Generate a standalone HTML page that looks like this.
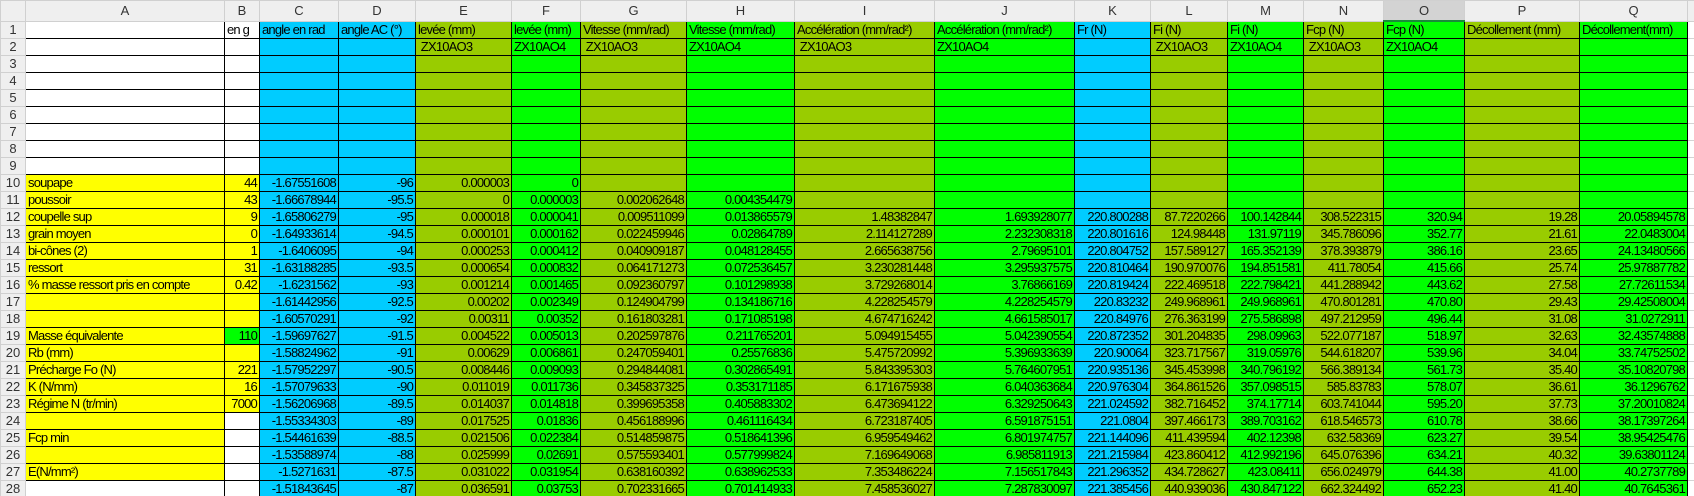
<!DOCTYPE html>
<html><head><meta charset="utf-8"><style>
html,body{margin:0;padding:0;background:#fff;width:1694px;height:496px;overflow:hidden}
table{border-collapse:collapse;table-layout:fixed;width:1694px;font-family:"Liberation Sans",Arial,sans-serif;font-size:13px;color:#000}
td{border:1px solid #000;height:16px;padding:0 2px;line-height:16px;white-space:nowrap;overflow:hidden;text-align:right;vertical-align:bottom;letter-spacing:-0.8px}
th{background:#efefef;border:1px solid #d0d0d0;font-weight:normal;color:#333;font-size:13px;padding:0;text-align:center;white-space:nowrap;overflow:hidden}
thead th{height:19px}
tbody th{height:16px;line-height:16px}
td.l{text-align:left}
.y{background:#ff0}.w{background:#fff}.gr{background:#00ff00}
td.e{border:1px solid #d4d4d4;background:#fff}
th.sel{background:#d3d3d3;border-bottom:2px solid #1a8a3a}
</style></head><body>
<table>
<colgroup>
<col style="width:25px"><col style="width:199px;background:#fff"><col style="width:35px;background:#fff">
<col style="width:79px;background:#00ccff"><col style="width:77px;background:#00ccff">
<col style="width:96px;background:#99cc00"><col style="width:69px;background:#00ff00">
<col style="width:106px;background:#99cc00"><col style="width:108px;background:#00ff00">
<col style="width:140px;background:#99cc00"><col style="width:140px;background:#00ff00">
<col style="width:76px;background:#00ccff">
<col style="width:77px;background:#99cc00"><col style="width:76px;background:#00ff00">
<col style="width:80px;background:#99cc00"><col style="width:81px;background:#00ff00">
<col style="width:115px;background:#99cc00"><col style="width:108px;background:#00ff00">
<col style="width:7px;background:#fff">
</colgroup>
<thead><tr><th></th><th>A</th><th>B</th><th>C</th><th>D</th><th>E</th><th>F</th><th>G</th><th>H</th><th>I</th><th>J</th><th>K</th><th>L</th><th>M</th><th>N</th><th class="sel">O</th><th>P</th><th>Q</th><th></th></tr></thead>
<tbody>
<tr><th>1</th><td></td><td class="l">en g</td><td class="l">angle en rad</td><td class="l">angle AC (°)</td><td class="l">levée (mm)</td><td class="l">levée (mm)</td><td class="l">Vitesse (mm/rad)</td><td class="l">Vitesse (mm/rad)</td><td class="l">Accélération (mm/rad²)</td><td class="l">Accélération (mm/rad²)</td><td class="l">Fr (N)</td><td class="l">Fi (N)</td><td class="l">Fi (N)</td><td class="l">Fcp (N)</td><td class="l">Fcp (N)</td><td class="l">Décollement (mm)</td><td class="l">Décollement(mm)</td><td class="e"></td></tr>
<tr><th>2</th><td></td><td></td><td></td><td></td><td class="l">&nbsp;ZX10AO3</td><td class="l">ZX10AO4</td><td class="l">&nbsp;ZX10AO3</td><td class="l">ZX10AO4</td><td class="l">&nbsp;ZX10AO3</td><td class="l">ZX10AO4</td><td></td><td class="l">&nbsp;ZX10AO3</td><td class="l">ZX10AO4</td><td class="l">&nbsp;ZX10AO3</td><td class="l">ZX10AO4</td><td></td><td></td><td class="e"></td></tr>
<tr><th>3</th><td></td><td></td><td></td><td></td><td></td><td></td><td></td><td></td><td></td><td></td><td></td><td></td><td></td><td></td><td></td><td></td><td></td><td class="e"></td></tr>
<tr><th>4</th><td></td><td></td><td></td><td></td><td></td><td></td><td></td><td></td><td></td><td></td><td></td><td></td><td></td><td></td><td></td><td></td><td></td><td class="e"></td></tr>
<tr><th>5</th><td></td><td></td><td></td><td></td><td></td><td></td><td></td><td></td><td></td><td></td><td></td><td></td><td></td><td></td><td></td><td></td><td></td><td class="e"></td></tr>
<tr><th>6</th><td></td><td></td><td></td><td></td><td></td><td></td><td></td><td></td><td></td><td></td><td></td><td></td><td></td><td></td><td></td><td></td><td></td><td class="e"></td></tr>
<tr><th>7</th><td></td><td></td><td></td><td></td><td></td><td></td><td></td><td></td><td></td><td></td><td></td><td></td><td></td><td></td><td></td><td></td><td></td><td class="e"></td></tr>
<tr><th>8</th><td></td><td></td><td></td><td></td><td></td><td></td><td></td><td></td><td></td><td></td><td></td><td></td><td></td><td></td><td></td><td></td><td></td><td class="e"></td></tr>
<tr><th>9</th><td></td><td></td><td></td><td></td><td></td><td></td><td></td><td></td><td></td><td></td><td></td><td></td><td></td><td></td><td></td><td></td><td></td><td class="e"></td></tr>
<tr><th>10</th><td class="l y">soupape</td><td class="y">44</td><td>-1.67551608</td><td>-96</td><td>0.000003</td><td>0</td><td></td><td></td><td></td><td></td><td></td><td></td><td></td><td></td><td></td><td></td><td></td><td class="e"></td></tr>
<tr><th>11</th><td class="l y">poussoir</td><td class="y">43</td><td>-1.66678944</td><td>-95.5</td><td>0</td><td>0.000003</td><td>0.002062648</td><td>0.004354479</td><td></td><td></td><td></td><td></td><td></td><td></td><td></td><td></td><td></td><td class="e"></td></tr>
<tr><th>12</th><td class="l y">coupelle sup</td><td class="y">9</td><td>-1.65806279</td><td>-95</td><td>0.000018</td><td>0.000041</td><td>0.009511099</td><td>0.013865579</td><td>1.48382847</td><td>1.693928077</td><td>220.800288</td><td>87.7220266</td><td>100.142844</td><td>308.522315</td><td>320.94</td><td>19.28</td><td>20.05894578</td><td class="e"></td></tr>
<tr><th>13</th><td class="l y">grain moyen</td><td class="y">0</td><td>-1.64933614</td><td>-94.5</td><td>0.000101</td><td>0.000162</td><td>0.022459946</td><td>0.02864789</td><td>2.114127289</td><td>2.232308318</td><td>220.801616</td><td>124.98448</td><td>131.97119</td><td>345.786096</td><td>352.77</td><td>21.61</td><td>22.0483004</td><td class="e"></td></tr>
<tr><th>14</th><td class="l y">bi-cônes (2)</td><td class="y">1</td><td>-1.6406095</td><td>-94</td><td>0.000253</td><td>0.000412</td><td>0.040909187</td><td>0.048128455</td><td>2.665638756</td><td>2.79695101</td><td>220.804752</td><td>157.589127</td><td>165.352139</td><td>378.393879</td><td>386.16</td><td>23.65</td><td>24.13480566</td><td class="e"></td></tr>
<tr><th>15</th><td class="l y">ressort</td><td class="y">31</td><td>-1.63188285</td><td>-93.5</td><td>0.000654</td><td>0.000832</td><td>0.064171273</td><td>0.072536457</td><td>3.230281448</td><td>3.295937575</td><td>220.810464</td><td>190.970076</td><td>194.851581</td><td>411.78054</td><td>415.66</td><td>25.74</td><td>25.97887782</td><td class="e"></td></tr>
<tr><th>16</th><td class="l y">% masse ressort pris en compte</td><td class="y">0.42</td><td>-1.6231562</td><td>-93</td><td>0.001214</td><td>0.001465</td><td>0.092360797</td><td>0.101298938</td><td>3.729268014</td><td>3.76866169</td><td>220.819424</td><td>222.469518</td><td>222.798421</td><td>441.288942</td><td>443.62</td><td>27.58</td><td>27.72611534</td><td class="e"></td></tr>
<tr><th>17</th><td class="y"></td><td class="y"></td><td>-1.61442956</td><td>-92.5</td><td>0.00202</td><td>0.002349</td><td>0.124904799</td><td>0.134186716</td><td>4.228254579</td><td>4.228254579</td><td>220.83232</td><td>249.968961</td><td>249.968961</td><td>470.801281</td><td>470.80</td><td>29.43</td><td>29.42508004</td><td class="e"></td></tr>
<tr><th>18</th><td class="y"></td><td class="y"></td><td>-1.60570291</td><td>-92</td><td>0.00311</td><td>0.00352</td><td>0.161803281</td><td>0.171085198</td><td>4.674716242</td><td>4.661585017</td><td>220.84976</td><td>276.363199</td><td>275.586898</td><td>497.212959</td><td>496.44</td><td>31.08</td><td>31.0272911</td><td class="e"></td></tr>
<tr><th>19</th><td class="l y">Masse équivalente</td><td class="gr">110</td><td>-1.59697627</td><td>-91.5</td><td>0.004522</td><td>0.005013</td><td>0.202597876</td><td>0.211765201</td><td>5.094915455</td><td>5.042390554</td><td>220.872352</td><td>301.204835</td><td>298.09963</td><td>522.077187</td><td>518.97</td><td>32.63</td><td>32.43574888</td><td class="e"></td></tr>
<tr><th>20</th><td class="l y">Rb (mm)</td><td class="y"></td><td>-1.58824962</td><td>-91</td><td>0.00629</td><td>0.006861</td><td>0.247059401</td><td>0.25576836</td><td>5.475720992</td><td>5.396933639</td><td>220.90064</td><td>323.717567</td><td>319.05976</td><td>544.618207</td><td>539.96</td><td>34.04</td><td>33.74752502</td><td class="e"></td></tr>
<tr><th>21</th><td class="l y">Précharge Fo (N)</td><td class="y">221</td><td>-1.57952297</td><td>-90.5</td><td>0.008446</td><td>0.009093</td><td>0.294844081</td><td>0.302865491</td><td>5.843395303</td><td>5.764607951</td><td>220.935136</td><td>345.453998</td><td>340.796192</td><td>566.389134</td><td>561.73</td><td>35.40</td><td>35.10820798</td><td class="e"></td></tr>
<tr><th>22</th><td class="l y">K (N/mm)</td><td class="y">16</td><td>-1.57079633</td><td>-90</td><td>0.011019</td><td>0.011736</td><td>0.345837325</td><td>0.353171185</td><td>6.171675938</td><td>6.040363684</td><td>220.976304</td><td>364.861526</td><td>357.098515</td><td>585.83783</td><td>578.07</td><td>36.61</td><td>36.1296762</td><td class="e"></td></tr>
<tr><th>23</th><td class="l y">Régime N (tr/min)</td><td class="y">7000</td><td>-1.56206968</td><td>-89.5</td><td>0.014037</td><td>0.014818</td><td>0.399695358</td><td>0.405883302</td><td>6.473694122</td><td>6.329250643</td><td>221.024592</td><td>382.716452</td><td>374.17714</td><td>603.741044</td><td>595.20</td><td>37.73</td><td>37.20010824</td><td class="e"></td></tr>
<tr><th>24</th><td class="y"></td><td></td><td>-1.55334303</td><td>-89</td><td>0.017525</td><td>0.01836</td><td>0.456188996</td><td>0.461116434</td><td>6.723187405</td><td>6.591875151</td><td>221.0804</td><td>397.466173</td><td>389.703162</td><td>618.546573</td><td>610.78</td><td>38.66</td><td>38.17397264</td><td class="e"></td></tr>
<tr><th>25</th><td class="l y">Fcp min</td><td></td><td>-1.54461639</td><td>-88.5</td><td>0.021506</td><td>0.022384</td><td>0.514859875</td><td>0.518641396</td><td>6.959549462</td><td>6.801974757</td><td>221.144096</td><td>411.439594</td><td>402.12398</td><td>632.58369</td><td>623.27</td><td>39.54</td><td>38.95425476</td><td class="e"></td></tr>
<tr><th>26</th><td class="y"></td><td></td><td>-1.53588974</td><td>-88</td><td>0.025999</td><td>0.02691</td><td>0.575593401</td><td>0.577999824</td><td>7.169649068</td><td>6.985811913</td><td>221.215984</td><td>423.860412</td><td>412.992196</td><td>645.076396</td><td>634.21</td><td>40.32</td><td>39.63801124</td><td class="e"></td></tr>
<tr><th>27</th><td class="l y">E(N/mm²)</td><td></td><td>-1.5271631</td><td>-87.5</td><td>0.031022</td><td>0.031954</td><td>0.638160392</td><td>0.638962533</td><td>7.353486224</td><td>7.156517843</td><td>221.296352</td><td>434.728627</td><td>423.08411</td><td>656.024979</td><td>644.38</td><td>41.00</td><td>40.2737789</td><td class="e"></td></tr>
<tr><th>28</th><td></td><td></td><td>-1.51843645</td><td>-87</td><td>0.036591</td><td>0.03753</td><td>0.702331665</td><td>0.701414933</td><td>7.458536027</td><td>7.287830097</td><td>221.385456</td><td>440.939036</td><td>430.847122</td><td>662.324492</td><td>652.23</td><td>41.40</td><td>40.7645361</td><td class="e"></td></tr>
</tbody></table>
</body></html>
